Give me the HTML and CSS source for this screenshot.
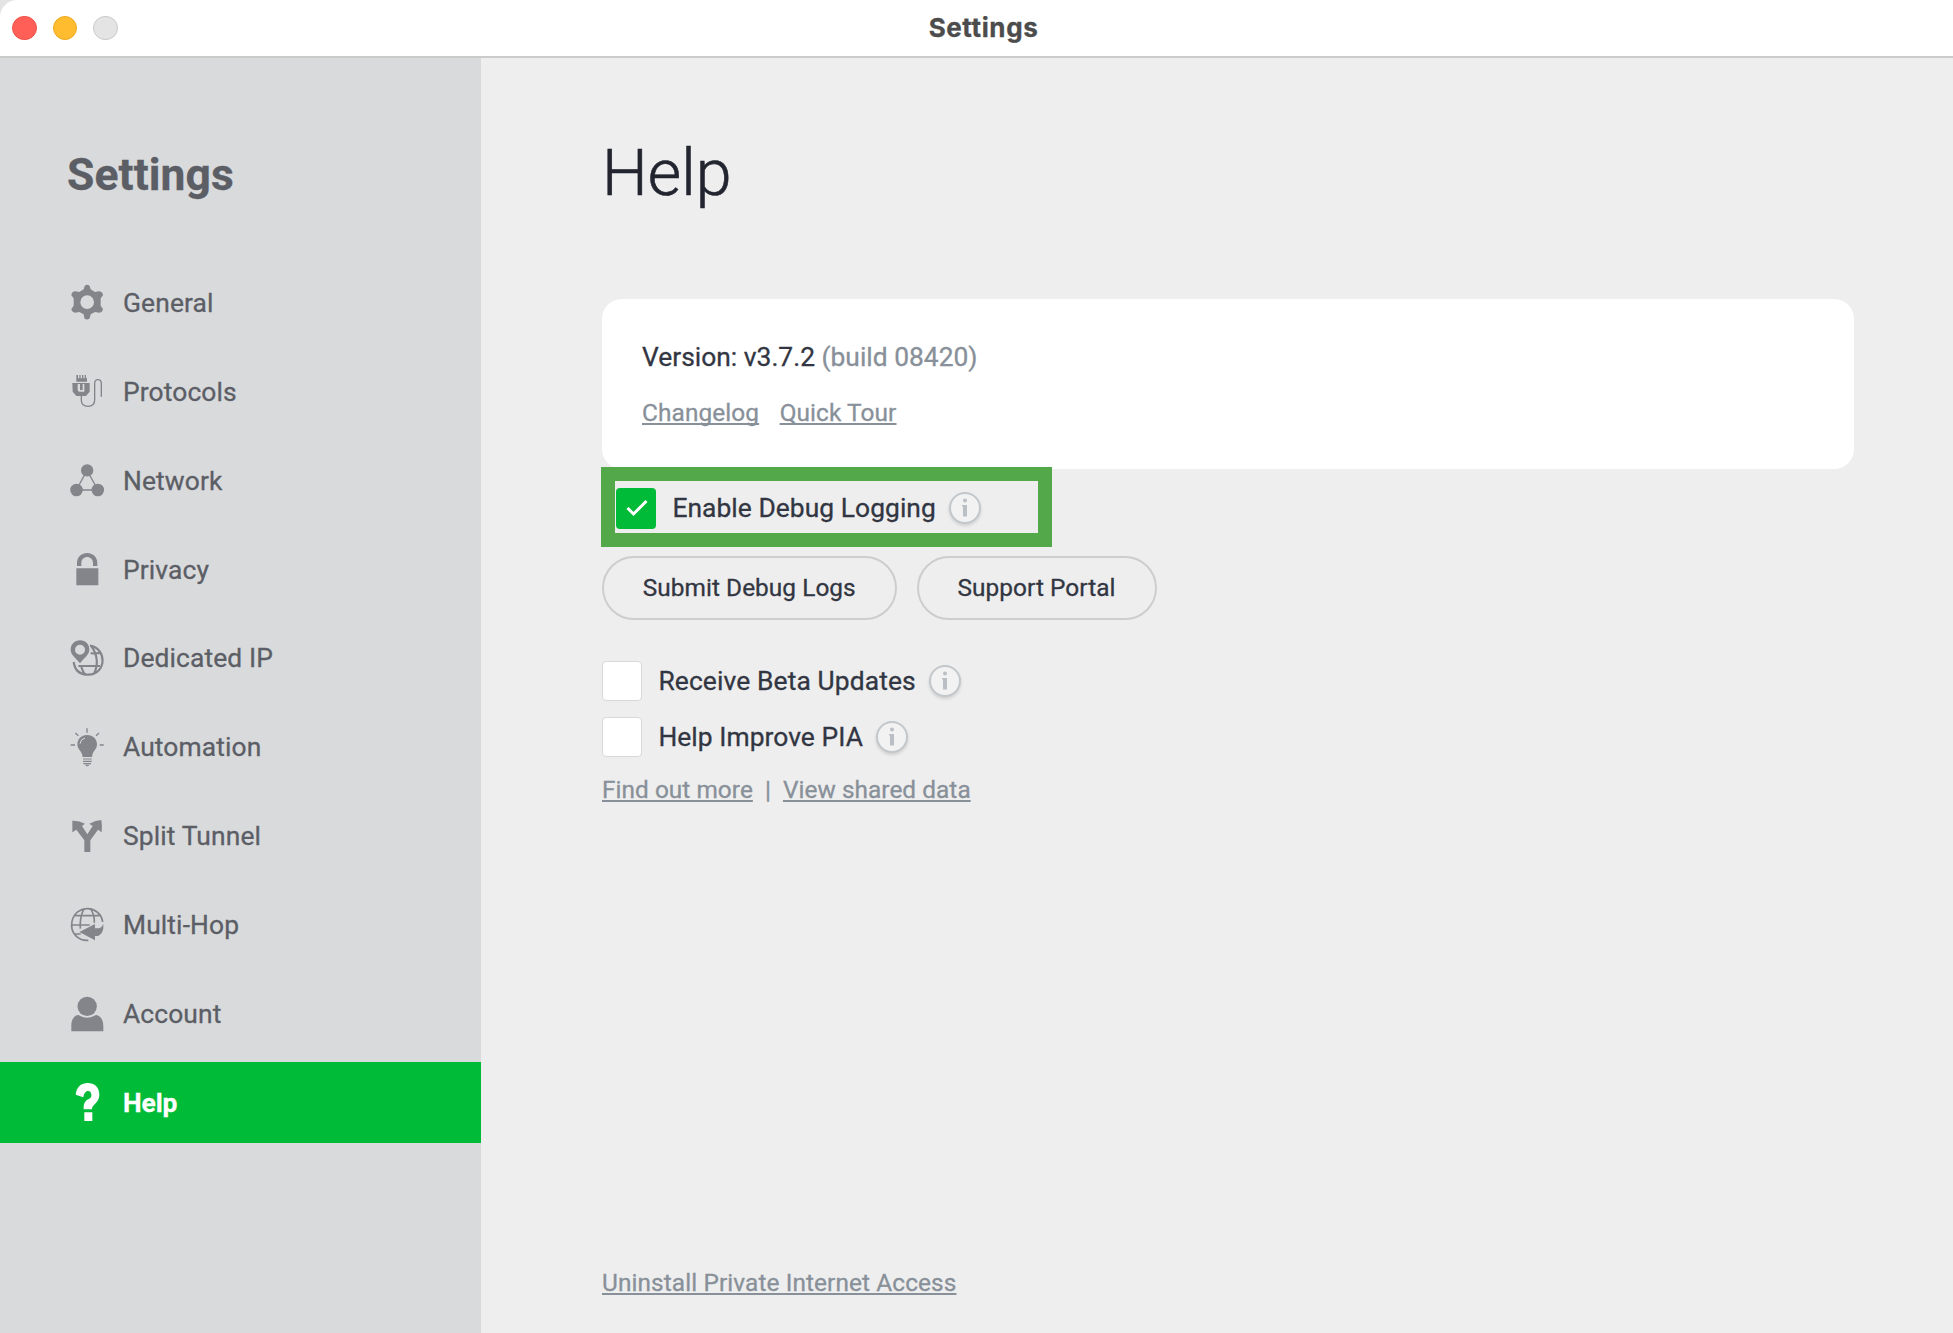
FILE: index.html
```html
<!DOCTYPE html>
<html lang="en">
<head>
<meta charset="utf-8">
<title>Settings</title>
<link rel="stylesheet" href="styles.css">
</head>
<body>
<div class="window">
  <header class="titlebar">
    <div class="lights">
      <span class="light light-close"></span>
      <span class="light light-minimize"></span>
      <span class="light light-disabled"></span>
    </div>
    <span class="window-title">Settings</span>
  </header>
  <div class="body">
    <aside class="sidebar">
      <h2 class="sidebar-title">Settings</h2>
      <nav class="nav">
        <a class="nav-item">
          <svg class="nav-icon" viewBox="50 68 120 120"><path fill-rule="evenodd" d="M103 80Q110 73 118 80L121 90L134 98L145 96Q155 96 158 106L158 108L151 117V139L158 149Q157 159 147 160L134 158L121 165L118 177Q110 184 102 177L100 165L87 158L75 160Q64 158 63 149L70 139V117L63 108Q64 96 75 96L87 98L100 90ZM110.500 108A20.500 20.500 0 1 0 110.500 149A20.500 20.500 0 1 0 110.500 108Z"/></svg>
          <span>General</span></a>
        <a class="nav-item">
          <svg class="nav-icon" viewBox="50 335 120 120"><path fill-rule="evenodd" d="M78 347H83V357H87V347H91V357H95V347H99V357H103V347H107V357H110V367H78ZM66 371H118V397L107 410H78L67 397ZM82 374V392Q82 397 88 397H102V374H97V392H89V374Z"/><path class="line" stroke-width="4" d="M93 409V423Q93 441 113 441Q133 441 133 422V373Q133 361 143 361Q153 361 153 373V412"/></svg>
          <span>Protocols</span></a>
        <a class="nav-item">
          <svg class="nav-icon" viewBox="50 601 120 120"><path class="line" stroke-width="4" d="M110 632L78 691H143Z"/><circle cx="110.500" cy="632" r="18.500"/><circle cx="78.500" cy="691" r="18.800"/><circle cx="142.500" cy="691" r="18.800"/></svg>
          <span>Network</span></a>
        <a class="nav-item">
          <svg class="nav-icon" viewBox="50 58 120 120"><path d="M78 116H144V167H78ZM80 109V101C80 60 141 60 141 101V109H128V101C128 76 93 76 93 101V109Z"/></svg>
          <span>Privacy</span></a>
        <a class="nav-item">
          <svg class="nav-icon" viewBox="50 325 120 120"><path class="line" stroke-width="6.500" d="M119 348C170 356 170 433 114 435C88 435 73 420 70 397M123 350C143 375 144 410 130 433M84 409H149M121 370Q139 374 151 368M93 412Q99 431 106 434"/><path fill-rule="evenodd" d="M89 332C106 332 117 344 117 359C117 376 103 383 89 401C75 383 61 376 61 360C61 344 73 332 89 332ZM89 345A15 15 0 1 0 89 375A15 15 0 1 0 89 345Z"/></svg>
          <span>Dedicated IP</span></a>
        <a class="nav-item">
          <svg class="nav-icon" viewBox="50 591 120 120"><path class="line" stroke-width="4" d="M110 595V608M75 609L84 617M146 609L137 617M61 645H74M148 645H160"/><path d="M110 615C129 615 140 628 140 643C140 660 127 662 125 681H97C95 662 81 660 81 643C81 628 92 615 110 615Z"/><path class="line cut" stroke-width="3" d="M89 641Q91 627 104 624"/><path class="line" stroke-width="3.500" d="M98 687H124M98 694H124M99 701H122"/><path d="M104 704H117Q111 713 104 704Z"/></svg>
          <span>Automation</span></a>
        <a class="nav-item">
          <svg class="nav-icon" viewBox="50 78 120 120"><path d="M66 92Q86 91 104 101L95 108L111 133L127 108L117 101Q136 91 153 90Q156 107 154 127L143 119L120 151V186H102V151L78 119L66 127Z"/></svg>
          <span>Split Tunnel</span></a>
        <a class="nav-item">
          <svg class="nav-icon" viewBox="50 345 120 120"><path class="line" stroke-width="5" d="M157 396C150 345 76 341 65 394C58 430 85 453 114 451M74 377H147M64 405H118M100 359Q88 380 90 416M122 359Q133 376 132 398M74 432H91"/><path d="M87 426L134 402V415H147Q154 413 159 402V415Q156 433 143 438H134V451Z"/></svg>
          <span>Multi-Hop</span></a>
        <a class="nav-item">
          <svg class="nav-icon" viewBox="50 611 120 120"><circle cx="110.500" cy="648" r="29"/><path d="M63 723V707C63 684 74 675 84 674Q110 690 137 674C148 675 159 686 159 707V723Z"/></svg>
          <span>Account</span></a>
        <a class="nav-item nav-item-active">
          <svg class="nav-icon" viewBox="200 128 120 120"><path d="M226 166C229 142 243 131 262 131C283 131 297 144 297 166C297 191 275 194 275 210H250C249 192 255 184 264 180C273 176 275 170 272 162C269 151 252 152 249 174ZM252 219H276V245H252Z"/></svg>
          <span>Help</span></a>
      </nav>
    </aside>
    <main class="content">
      <h1 class="page-title">Help</h1>
      <section class="card">
        <p class="version">Version: v3.7.2 <span class="build">(build 08420)</span></p>
        <p class="links card-links"><a class="link">Changelog</a><a class="link">Quick Tour</a></p>
      </section>
      <div class="highlight">
        <div class="option">
          <span class="checkbox checkbox-checked"><svg viewBox="0 0 40 40"><path d="M11.500 20L17.500 26L30.500 13"/></svg></span>
          <span class="option-label">Enable Debug Logging</span>
          <svg class="info" viewBox="0 0 32 32"><circle cx="16" cy="16" r="15"/><path d="M16 6.500a2 2 0 1 1 0 4a2 2 0 1 1 0-4ZM13 13H18V24.500H14V14.500H13Z"/></svg>
        </div>
      </div>
      <div class="buttons">
        <button class="button button-submit">Submit Debug Logs</button>
        <button class="button button-portal">Support Portal</button>
      </div>
      <div class="options">
        <div class="option">
          <span class="checkbox"></span>
          <span class="option-label beta-label">Receive Beta Updates</span>
          <svg class="info" viewBox="0 0 32 32"><circle cx="16" cy="16" r="15"/><path d="M16 6.500a2 2 0 1 1 0 4a2 2 0 1 1 0-4ZM13 13H18V24.500H14V14.500H13Z"/></svg>
        </div>
        <div class="option">
          <span class="checkbox"></span>
          <span class="option-label">Help Improve PIA</span>
          <svg class="info" viewBox="0 0 32 32"><circle cx="16" cy="16" r="15"/><path d="M16 6.500a2 2 0 1 1 0 4a2 2 0 1 1 0-4ZM13 13H18V24.500H14V14.500H13Z"/></svg>
        </div>
      </div>
      <p class="links share-links"><a class="link">Find out more</a><span class="divider">|</span><a class="link">View shared data</a></p>
      <p class="links uninstall"><a class="link">Uninstall Private Internet Access</a></p>
    </main>
  </div>
</div>
</body>
</html>
```
FILE: styles.css
```css
* { box-sizing: border-box; }
body {
  margin: 0; background: #e4e4e4;
  font-family: Roboto, "Liberation Sans", sans-serif;
  -webkit-text-stroke: .3px currentColor;
}
h1, h2, p { margin: 0; }

.window {
  width: 1953px; height: 1333px;
  display: flex; flex-direction: column;
  overflow: hidden;
  border-top-left-radius: 17px;
  background: #eee;
}
.titlebar {
  height: 58px; flex: none;
  display: grid; grid-template-columns: 1fr auto 1fr; align-items: center;
  padding: 0 0 1px 12px;
  background: #fff;
  border-bottom: 2px solid #cbcbca;
  border-top-left-radius: 17px;
}
.lights { display: flex; gap: 16px; padding-top: 1px; }
.light { width: 24.500px; height: 24.500px; border-radius: 50%; border: 1px solid; }
.light-close { background: #ff5f57; border-color: #ee544c; }
.light-minimize { background: #febc2e; border-color: #eba91f; }
.light-disabled { background: #e4e4e4; border-color: #c9c9c9; }
.window-title {
  margin-left: 2px;
  font: 700 26px/32px Inter, sans-serif;
  letter-spacing: .6px;
  color: #4c4c4c;
}

.body { flex: 1; display: flex; min-height: 0; }
.sidebar { width: 481px; background: #d9dadc; padding-top: 87px; }
.sidebar-title {
  padding-left: 67px; height: 117px;
  font-size: 44.400px; line-height: 60px; font-weight: 700; letter-spacing: .1px; color: #5c5e66;
}
.nav { display: flex; flex-direction: column; gap: 8.100px; }
.nav-item {
  height: 80.800px; display: flex; align-items: center; gap: 16.300px;
  padding-left: 66.700px;
  font-size: 26.400px; line-height: 32px; letter-spacing: .12px; color: #5c5e66;
}
.nav-item span { padding-top: 1px; }
.nav-icon { width: 40px; height: 40px; flex: none; fill: #83858b; overflow: visible; }
.line { fill: none; stroke: #83858b; }
.line.cut { stroke: #d9dadc; }
.nav-item-active { background: #00bb37; color: #fff; font-weight: 700; letter-spacing: -.1px; }
.nav-item-active .nav-icon { fill: #fff; }

.content { flex: 1; display: flex; flex-direction: column; padding: 75px 99px 0 121px; }
.page-title {
  height: 166px;
  font-size: 64.600px; line-height: 80px; font-weight: 300; color: #22252f;
  -webkit-text-stroke-width: .6px;
}
.card { height: 170px; padding: 42px 40px 0; border-radius: 20px; background: #fff; }
.version { font-size: 26.400px; line-height: 32px; color: #323642; }
.build, .link, .divider { color: #889099; }
.links { display: flex; font-size: 24.400px; line-height: 30px; letter-spacing: .1px; }
.card-links { margin-top: 24.500px; gap: 20.500px; }
.link { text-decoration: underline; text-decoration-thickness: 2px; text-underline-offset: 2px; text-decoration-skip-ink: none; }

.highlight {
  width: 451px; height: 80px; margin: -2px 0 0 -1px;
  border: 14px solid #53a84a;
  display: flex; align-items: center; padding: 3px 0 0 1px;
  z-index: 1;
}
.option { display: flex; align-items: center; height: 40.400px; }
.checkbox { width: 40.400px; height: 40.400px; border-radius: 4px; background: #fff; border: 1px solid #d7d8da; flex: none; }
.checkbox-checked { background: #00bb37; border: 0; }
.checkbox-checked svg { width: 40px; height: 40px; display: block; }
.checkbox-checked path { fill: none; stroke: #fff; stroke-width: 3; }
.option-label {
  margin-left: 16px; margin-right: 13.500px;
  font-size: 26.400px; line-height: 32px; letter-spacing: .05px; color: #323642;
}
.beta-label { letter-spacing: .12px; }
.info { width: 32px; height: 32px; overflow: visible; filter: drop-shadow(0 2px 1.500px rgba(0, 0, 0, .12)); }
.info circle { fill: #f2f2f2; stroke: #c2c7cb; stroke-width: 2; }
.info path { fill: #b9bfc4; }

.buttons { display: flex; gap: 20px; margin-top: 9px; }
.button {
  height: 64px; padding: 0; border: 2px solid #cdcdcd; border-radius: 32px;
  background: transparent; font: 24.400px/30px Roboto, sans-serif; letter-spacing: .05px; color: #323642;
  -webkit-text-stroke: .3px currentColor;
}
.button-submit { width: 294.500px; }
.button-portal { width: 240px; }

.options { display: flex; flex-direction: column; gap: 16px; margin-top: 40.500px; }
.share-links { margin-top: 18px; }
.share-links .link { letter-spacing: .04px; }
.divider { margin: 0 12px; }
.uninstall { margin-top: 463px; }
```
